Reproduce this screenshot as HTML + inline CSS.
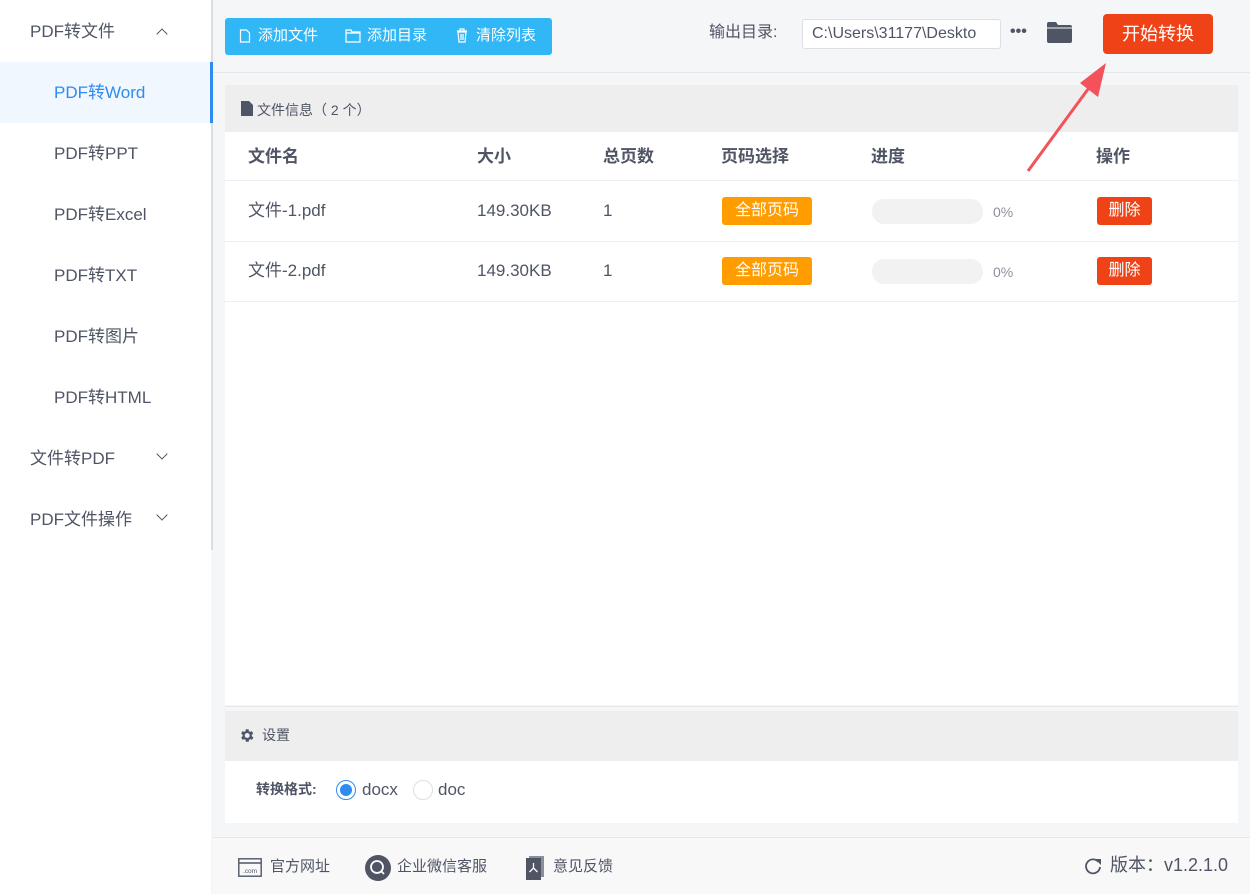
<!DOCTYPE html>
<html><head><meta charset="utf-8"><style>
*{margin:0;padding:0;box-sizing:border-box}
body{width:1250px;height:894px;position:relative;background:#f5f6f8;font-family:"Liberation Sans","Noto Sans CJK SC",sans-serif;color:#4f5565;overflow:hidden}
.a{position:absolute;line-height:20px;white-space:nowrap}
.side{left:0;top:0;width:211px;height:894px;background:#fff}
.si{position:absolute;left:0;width:211px;height:61px;line-height:61px;font-size:17px;color:#4f5565}
.chev{position:absolute;left:158px;top:26px;width:8px;height:8px;border-left:1.5px solid #4f5565;border-top:1.5px solid #4f5565}
.btn{color:#fff;font-size:15px}
.tag{position:absolute;color:#fff;font-size:16px;line-height:28px;height:28px;border-radius:3px;text-align:center}
</style></head><body>
<div class="a side"></div>
<div class="a" style="left:211px;top:0;width:2px;height:550px;background:#dcdde2"></div>
<div class="si" style="top:1px;padding-left:30px">PDF转文件<span class="chev" style="transform:rotate(45deg);top:29px"></span></div>
<div class="si" style="top:62px;padding-left:54px;background:#f0f7ff;color:#2f8bf0">PDF转Word</div>
<div class="a" style="left:210px;top:62px;width:3px;height:61px;background:#2f8bf0"></div>
<div class="si" style="top:123px;padding-left:54px">PDF转PPT</div>
<div class="si" style="top:184px;padding-left:54px">PDF转Excel</div>
<div class="si" style="top:245px;padding-left:54px">PDF转TXT</div>
<div class="si" style="top:306px;padding-left:54px">PDF转图片</div>
<div class="si" style="top:367px;padding-left:54px">PDF转HTML</div>
<div class="si" style="top:428px;padding-left:30px">文件转PDF<span class="chev" style="transform:rotate(225deg);top:22px"></span></div>
<div class="si" style="top:489px;padding-left:30px">PDF文件操作<span class="chev" style="transform:rotate(225deg);top:22px"></span></div>

<!-- top bar -->
<div class="a" style="left:213px;top:72px;width:1037px;height:1px;background:#e6e7ea"></div>
<div class="a" style="left:225px;top:18px;width:327px;height:37px;background:#31b7f5;border-radius:3px"></div>
<svg class="a" style="left:239px;top:29px" width="12" height="14" viewBox="0 0 12 14"><path d="M1.5 1h6l3 3v9h-9z" fill="none" stroke="#fff" stroke-width="1.2"/></svg>
<div class="a btn" style="left:258px;top:26px">添加文件</div>
<svg class="a" style="left:345px;top:29px" width="16" height="14" viewBox="0 0 16 14"><path d="M1 1h5l1 2h8v10H1z M1 4h14" fill="none" stroke="#fff" stroke-width="1.2"/></svg>
<div class="a btn" style="left:367px;top:26px">添加目录</div>
<svg class="a" style="left:456px;top:28px" width="12" height="15" viewBox="0 0 12 15"><path d="M1 3h10M4 3V1h4v2M2 4h8l-1 10H3z M5 6v6M7 6v6" fill="none" stroke="#fff" stroke-width="1.2"/></svg>
<div class="a btn" style="left:476px;top:26px">清除列表</div>

<div class="a" style="left:709px;top:23px;font-size:16px">输出目录:</div>
<div class="a" style="left:802px;top:19px;width:199px;height:30px;background:#fff;border:1px solid #dcdfe6;border-radius:3px;font-size:16px;line-height:28px;padding-left:9px;overflow:hidden">C:\Users\31177\Deskto</div>
<div class="a" style="left:1010px;top:22px;font-size:16px;font-weight:bold;letter-spacing:0px">•••</div>
<svg class="a" style="left:1047px;top:21px" width="25" height="22" viewBox="0 0 25 22"><path d="M0 3q0-2 2-2h7l2 3h12q2 0 2 2v14q0 2-2 2H2q-2 0-2-2z" fill="#4f5565"/><path d="M0 7h25" stroke="#f5f6f8" stroke-width="1"/></svg>
<div class="a" style="left:1103px;top:14px;width:110px;height:40px;background:#ef4317;border-radius:4px;color:#fff;font-size:18px;line-height:40px;text-align:center">开始转换</div>

<!-- panel -->
<div class="a" style="left:225px;top:85px;width:1013px;height:47px;background:#eeeeee"></div>
<svg class="a" style="left:241px;top:101px" width="12" height="15" viewBox="0 0 12 15"><path d="M0 0h8l4 4v11H0z" fill="#4f5565"/></svg>
<div class="a" style="left:257px;top:100px;font-size:14px">文件信息（ 2 个）</div>
<div class="a" style="left:225px;top:132px;width:1013px;height:573px;background:#fff"></div>
<div class="a" style="left:225px;top:180px;width:1013px;height:1px;background:#ebeef5"></div>
<div class="a" style="left:225px;top:241px;width:1013px;height:1px;background:#ebeef5"></div>
<div class="a" style="left:225px;top:301px;width:1013px;height:1px;background:#ebeef5"></div>
<div class="a" style="top:147px;left:248px;font-size:17px;font-weight:bold">文件名</div>
<div class="a" style="top:147px;left:477px;font-size:17px;font-weight:bold">大小</div>
<div class="a" style="top:147px;left:603px;font-size:17px;font-weight:bold">总页数</div>
<div class="a" style="top:147px;left:721px;font-size:17px;font-weight:bold">页码选择</div>
<div class="a" style="top:147px;left:871px;font-size:17px;font-weight:bold">进度</div>
<div class="a" style="top:147px;left:1096px;font-size:17px;font-weight:bold">操作</div>

<div class="a" style="top:201px;left:248px;font-size:17px">文件-1.pdf</div>
<div class="a" style="top:201px;left:477px;font-size:17px">149.30KB</div>
<div class="a" style="top:201px;left:603px;font-size:17px">1</div>
<div class="tag" style="top:197px;left:722px;width:90px;background:#ff9c00">全部页码</div>
<div class="a" style="top:199px;left:872px;width:111px;height:25px;border-radius:12px;background:#f2f2f2"></div>
<div class="a" style="top:202px;left:993px;font-size:14px;color:#8c909a">0%</div>
<div class="tag" style="top:197px;left:1097px;width:55px;background:#ef4317">删除</div>

<div class="a" style="top:261px;left:248px;font-size:17px">文件-2.pdf</div>
<div class="a" style="top:261px;left:477px;font-size:17px">149.30KB</div>
<div class="a" style="top:261px;left:603px;font-size:17px">1</div>
<div class="tag" style="top:257px;left:722px;width:90px;background:#ff9c00">全部页码</div>
<div class="a" style="top:259px;left:872px;width:111px;height:25px;border-radius:12px;background:#f2f2f2"></div>
<div class="a" style="top:262px;left:993px;font-size:14px;color:#8c909a">0%</div>
<div class="tag" style="top:257px;left:1097px;width:55px;background:#ef4317">删除</div>

<!-- arrow on top -->
<svg class="a" style="left:1020px;top:55px;z-index:5" width="100" height="120" viewBox="0 0 100 120"><path d="M8 116L74 26" stroke="#f4525a" stroke-width="3"/><path d="M86 8L60 28L78 42z" fill="#f4525a"/></svg>

<!-- settings -->
<div class="a" style="left:225px;top:706px;width:1013px;height:1px;background:#e6e7ea"></div>
<div class="a" style="left:225px;top:711px;width:1013px;height:50px;background:#eeeeee"></div>
<svg class="a" style="left:238px;top:727px" width="17" height="17" viewBox="0 0 24 24"><path fill="#4f5565" d="M19.4 13a7.5 7.5 0 000-2l2.1-1.6-2-3.5-2.5 1a7.4 7.4 0 00-1.7-1L15 3.2h-4l-.4 2.7a7.4 7.4 0 00-1.7 1l-2.5-1-2 3.5L6.6 11a7.5 7.5 0 000 2l-2.1 1.6 2 3.5 2.5-1a7.4 7.4 0 001.7 1l.4 2.7h4l.4-2.7a7.4 7.4 0 001.7-1l2.5 1 2-3.5zM13 15.5a3.5 3.5 0 110-7 3.5 3.5 0 010 7z"/></svg>
<div class="a" style="left:262px;top:725px;font-size:14px">设置</div>
<div class="a" style="left:225px;top:761px;width:1013px;height:62px;background:#fff"></div>
<div class="a" style="left:256px;top:779px;font-size:14px;font-weight:bold">转换格式:</div>
<div class="a" style="left:336px;top:780px;width:20px;height:20px;border-radius:50%;border:1px solid #2f8bf0"></div>
<div class="a" style="left:340px;top:784px;width:12px;height:12px;border-radius:50%;background:#2f8bf0"></div>
<div class="a" style="left:362px;top:780px;font-size:17px">docx</div>
<div class="a" style="left:413px;top:780px;width:20px;height:20px;border-radius:50%;border:1px solid #dcdfe6;background:#fff"></div>
<div class="a" style="left:438px;top:780px;font-size:17px">doc</div>

<!-- footer -->
<div class="a" style="left:213px;top:837px;width:1037px;height:1px;background:#e6e7ea"></div>
<div class="a" style="left:213px;top:838px;width:1037px;height:56px;background:#f8f8f9"></div>
<svg class="a" style="left:238px;top:858px" width="24" height="19" viewBox="0 0 24 19"><rect x="0.8" y="0.8" width="22.4" height="17.4" fill="none" stroke="#4f5565" stroke-width="1.4"/><path d="M1 5h22" stroke="#4f5565" stroke-width="1.4"/><text x="12" y="15" font-size="6.5" text-anchor="middle" fill="#4f5565" font-family="Liberation Sans">.com</text></svg>
<div class="a" style="left:270px;top:857px;font-size:15px">官方网址</div>
<svg class="a" style="left:365px;top:855px" width="26" height="26" viewBox="0 0 26 26"><circle cx="13" cy="13" r="13" fill="#4f5565"/><circle cx="12" cy="12" r="6" fill="none" stroke="#fff" stroke-width="1.8"/><path d="M16 16l3 3" stroke="#fff" stroke-width="1.8"/></svg>
<div class="a" style="left:397px;top:857px;font-size:15px">企业微信客服</div>
<svg class="a" style="left:526px;top:856px" width="18" height="24" viewBox="0 0 18 24"><path d="M3 0h15v21H3z" fill="#8a8f9c"/><path d="M0 2h15v22H0z" fill="#4f5565"/><path d="M7.5 7v5M7.5 12l-4 4M7.5 12l4 4" stroke="#fff" stroke-width="1.3" fill="none"/></svg>
<div class="a" style="left:553px;top:857px;font-size:15px">意见反馈</div>
<svg class="a" style="left:1083px;top:856px" width="20" height="20" viewBox="0 0 20 20"><path d="M15.5 6A7 7 0 1 0 17 11" fill="none" stroke="#4f5565" stroke-width="1.8"/><path d="M12 3h6v6z" fill="#4f5565"/></svg>
<div class="a" style="left:1110px;top:855px;font-size:18px">版本：v1.2.1.0</div>
</body></html>
